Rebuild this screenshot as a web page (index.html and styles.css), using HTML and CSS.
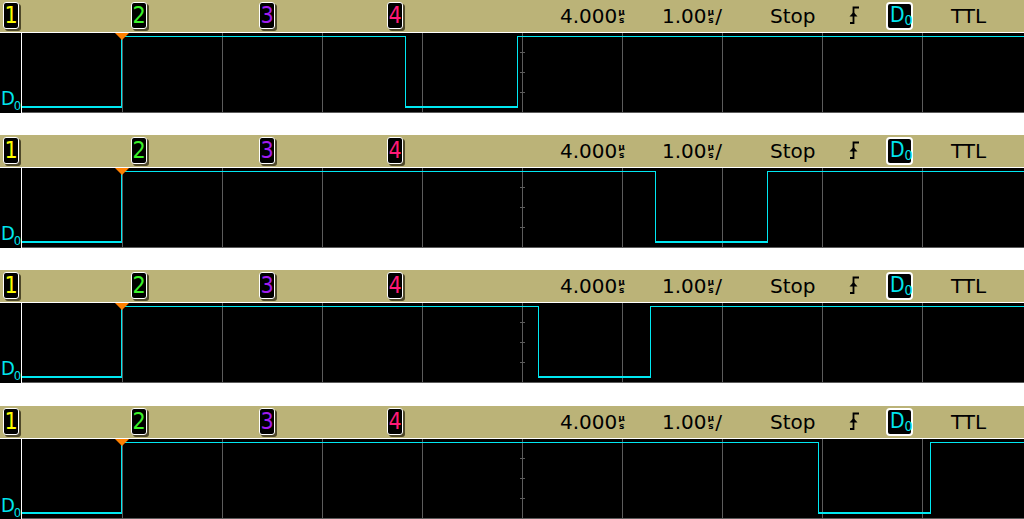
FILE: index.html
```html
<!DOCTYPE html>
<html>
<head>
<meta charset="utf-8">
<link rel="stylesheet" href="styles.css">
</head>
<body>
<div class="stack">

  <section class="panel">
    <header class="bar">
      <span class="ch c1"><b>1</b></span>
      <span class="ch c2"><b>2</b></span>
      <span class="ch c3"><b>3</b></span>
      <span class="ch c4"><b>4</b></span>
      <span class="val">4.000<i class="us"><em>µ</em><em>s</em></i></span>
      <span class="val">1.00<i class="us"><em>µ</em><em>s</em></i>/</span>
      <span class="val">Stop</span>
      <span class="trig"><svg width="12" height="18" viewBox="0 0 12 18"><path d="M1 17H4.5V1.5H10" fill="none" stroke="#000" stroke-width="1.8"/><path d="M0.5 10.5L4.5 6L8.5 10.5Z" fill="#000"/></svg></span>
      <span class="src"><b class="dbadge">D<sub>0</sub></b></span>
      <span class="val">TTL</span>
    </header>
    <div class="plot">
      <div class="gutter"><span class="dlabel">D<sub>0</sub></span></div>
      <div class="grid">
        <svg width="1002" height="80" viewBox="0 0 1002 80">
          <path class="gl" d="M100.5 0V80M200.5 0V80M300.5 0V80M400.5 0V80M500.5 0V80M600.5 0V80M700.5 0V80M800.5 0V80M900.5 0V80M0 79.5H1002M498 19.5h5M498 39.5h5M498 59.5h5"/>
          <path class="tr1" d="M99.5 74V3.5H383.5V74M495.5 74V3.5H1002"/>
          <path class="tr2" d="M0 74H100M383 74H496"/>
          <polygon class="tm" points="93,0 107,0 100,7"/>
        </svg>
      </div>
    </div>
  </section>

  <section class="panel">
    <header class="bar">
      <span class="ch c1"><b>1</b></span>
      <span class="ch c2"><b>2</b></span>
      <span class="ch c3"><b>3</b></span>
      <span class="ch c4"><b>4</b></span>
      <span class="val">4.000<i class="us"><em>µ</em><em>s</em></i></span>
      <span class="val">1.00<i class="us"><em>µ</em><em>s</em></i>/</span>
      <span class="val">Stop</span>
      <span class="trig"><svg width="12" height="18" viewBox="0 0 12 18"><path d="M1 17H4.5V1.5H10" fill="none" stroke="#000" stroke-width="1.8"/><path d="M0.5 10.5L4.5 6L8.5 10.5Z" fill="#000"/></svg></span>
      <span class="src"><b class="dbadge">D<sub>0</sub></b></span>
      <span class="val">TTL</span>
    </header>
    <div class="plot">
      <div class="gutter"><span class="dlabel">D<sub>0</sub></span></div>
      <div class="grid">
        <svg width="1002" height="80" viewBox="0 0 1002 80">
          <path class="gl" d="M100.5 0V80M200.5 0V80M300.5 0V80M400.5 0V80M500.5 0V80M600.5 0V80M700.5 0V80M800.5 0V80M900.5 0V80M0 79.5H1002M498 19.5h5M498 39.5h5M498 59.5h5"/>
          <path class="tr1" d="M99.5 74V3.5H633.5V74M745.5 74V3.5H1002"/>
          <path class="tr2" d="M0 74H100M633 74H746"/>
          <polygon class="tm" points="93,0 107,0 100,7"/>
        </svg>
      </div>
    </div>
  </section>

  <section class="panel">
    <header class="bar">
      <span class="ch c1"><b>1</b></span>
      <span class="ch c2"><b>2</b></span>
      <span class="ch c3"><b>3</b></span>
      <span class="ch c4"><b>4</b></span>
      <span class="val">4.000<i class="us"><em>µ</em><em>s</em></i></span>
      <span class="val">1.00<i class="us"><em>µ</em><em>s</em></i>/</span>
      <span class="val">Stop</span>
      <span class="trig"><svg width="12" height="18" viewBox="0 0 12 18"><path d="M1 17H4.5V1.5H10" fill="none" stroke="#000" stroke-width="1.8"/><path d="M0.5 10.5L4.5 6L8.5 10.5Z" fill="#000"/></svg></span>
      <span class="src"><b class="dbadge">D<sub>0</sub></b></span>
      <span class="val">TTL</span>
    </header>
    <div class="plot">
      <div class="gutter"><span class="dlabel">D<sub>0</sub></span></div>
      <div class="grid">
        <svg width="1002" height="80" viewBox="0 0 1002 80">
          <path class="gl" d="M100.5 0V80M200.5 0V80M300.5 0V80M400.5 0V80M500.5 0V80M600.5 0V80M700.5 0V80M800.5 0V80M900.5 0V80M0 79.5H1002M498 19.5h5M498 39.5h5M498 59.5h5"/>
          <path class="tr1" d="M99.5 74V3.5H516.5V74M628.5 74V3.5H1002"/>
          <path class="tr2" d="M0 74H100M516 74H629"/>
          <polygon class="tm" points="93,0 107,0 100,7"/>
        </svg>
      </div>
    </div>
  </section>

  <section class="panel last">
    <header class="bar">
      <span class="ch c1"><b>1</b></span>
      <span class="ch c2"><b>2</b></span>
      <span class="ch c3"><b>3</b></span>
      <span class="ch c4"><b>4</b></span>
      <span class="val">4.000<i class="us"><em>µ</em><em>s</em></i></span>
      <span class="val">1.00<i class="us"><em>µ</em><em>s</em></i>/</span>
      <span class="val">Stop</span>
      <span class="trig"><svg width="12" height="18" viewBox="0 0 12 18"><path d="M1 17H4.5V1.5H10" fill="none" stroke="#000" stroke-width="1.8"/><path d="M0.5 10.5L4.5 6L8.5 10.5Z" fill="#000"/></svg></span>
      <span class="src"><b class="dbadge">D<sub>0</sub></b></span>
      <span class="val">TTL</span>
    </header>
    <div class="plot">
      <div class="gutter"><span class="dlabel">D<sub>0</sub></span></div>
      <div class="grid">
        <svg width="1002" height="80" viewBox="0 0 1002 80">
          <path class="gl" d="M100.5 0V80M200.5 0V80M300.5 0V80M400.5 0V80M500.5 0V80M600.5 0V80M700.5 0V80M800.5 0V80M900.5 0V80M0 79.5H1002M498 19.5h5M498 39.5h5M498 59.5h5"/>
          <path class="tr1" d="M99.5 74V3.5H796.5V74M908.5 74V3.5H1002"/>
          <path class="tr2" d="M0 74H100M796 74H909"/>
          <polygon class="tm" points="93,0 107,0 100,7"/>
        </svg>
      </div>
    </div>
  </section>

</div>
</body>
</html>
```

FILE: styles.css
```css
* { box-sizing: border-box; }
html, body { margin: 0; padding: 0; background: #fff; }
body { width: 1024px; height: 519px; overflow: hidden; font-family: "DejaVu Sans", sans-serif; }

.stack { display: flex; flex-direction: column; gap: 22px; }
.panel { display: flex; flex-direction: column; height: 113px; }
.panel.last { margin-top: 1px; height: 114px; }

.bar {
  height: 32px;
  background: #bbb378;
  display: grid;
  grid-template-columns: 128px 128px 128px 173px 102px 108px 79px 37px 65px auto;
  align-items: center;
  padding-left: 3px;
  color: #000;
  font-size: 20px;
}

.ch { display: flex; align-items: flex-start; height: 32px; padding-top: 2px; }
.ch b {
  display: flex; align-items: center; justify-content: center;
  width: 16px; height: 27px;
  background: #000;
  border: 1.5px solid #fff;
  border-radius: 3px;
  box-shadow: 2px 2px 0 #4e4829;
  font-family: "DejaVu Sans Condensed", "DejaVu Sans", sans-serif;
  font-stretch: condensed;
  font-weight: normal;
  font-size: 23px;
  line-height: 1;
  padding-bottom: 1px;
}
.c1 b { color: #ffff00; }
.c2 b { color: #3cf22a; }
.c3 b { color: #a21cf0; }
.c4 b { color: #ff1a78; }

.val { display: flex; align-items: center; white-space: nowrap; line-height: 1; }
.us { display: inline-flex; flex-direction: column; font-style: normal; margin: 0 1px; }
.us em {
  display: block;
  height: 8px;
  font-style: normal;
  font-size: 9px;
  line-height: 8px;
  font-weight: bold;
  text-align: center;
  overflow: hidden;
}

.trig { display: flex; align-items: center; height: 32px; padding-bottom: 2px; }
.trig svg { display: block; }

.src { display: flex; align-items: flex-start; height: 32px; padding-top: 2px; }
.dbadge {
  display: flex; align-items: flex-start;
  width: 27px; height: 28px;
  background: #000;
  border: 2px solid #fff;
  border-radius: 4px;
  color: #00e5ee;
  font-family: "DejaVu Sans Condensed", "DejaVu Sans", sans-serif;
  font-stretch: condensed;
  font-weight: normal;
  font-size: 21px;
  line-height: 1;
  padding: 1px 0 0 2px;
}
.dbadge sub { font-size: 14px; vertical-align: baseline; position: relative; top: 8px; }

.plot {
  display: flex;
  height: 81px;
  border-top: 1px solid #fff;
  background: #000;
}
.panel.last .plot { height: 82px; }
.gutter { width: 21px; display: flex; align-items: flex-end; padding-bottom: 5px; padding-left: 1px; }
.dlabel {
  color: #00e5ee;
  font-family: "DejaVu Sans Condensed", "DejaVu Sans", sans-serif;
  font-stretch: condensed;
  font-size: 20px;
  line-height: 1;
  letter-spacing: -1px;
}
.dlabel sub { font-size: 13px; vertical-align: baseline; position: relative; top: 5px; }
.grid { width: 1003px; border-left: 1px solid #fff; }
.grid svg { display: block; }

.gl { stroke: #5c5c5c; stroke-width: 1; fill: none; shape-rendering: crispEdges; }
.tr1 { stroke: #00e8f2; stroke-width: 1; fill: none; shape-rendering: crispEdges; }
.tr2 { stroke: #00e8f2; stroke-width: 2; fill: none; shape-rendering: crispEdges; }
.tm { fill: #ff8000; }
```
